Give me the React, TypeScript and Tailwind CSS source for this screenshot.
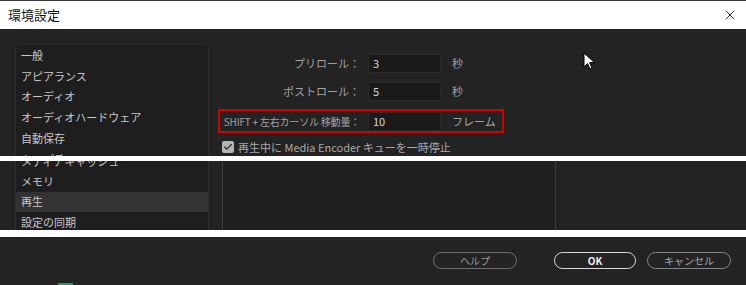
import { Check, X } from 'lucide-react';

const font = { fontFamily: '"Noto Sans CJK JP", "Noto Sans", sans-serif' };

const topItems = ['一般', 'アピアランス', 'オーディオ', 'オーディオハードウェア', '自動保存', 'キャプチャ'];
const midItems = ['メディアキャッシュ', 'メモリ', '再生', '設定の同期'];

function FormRow({ label, value, unit, boxed }: { label: string; value: string; unit: string; boxed?: boolean }) {
  return (
    <div
      className={`flex items-center h-[24px] w-[286px] border-2 ${boxed ? 'border-[#d40000]' : 'border-transparent'}`}
    >
      <div className="w-[148px] pr-[8px] flex justify-end text-[11px] text-[#a2a2a2] whitespace-nowrap">
        <span className={boxed ? 'text-[10px] tracking-[-0.2px]' : ''}>{label}</span>
      </div>
      <div className="w-[73px] h-[19px] shrink-0 bg-[#1a1a1a] border border-[#2a2a2a] rounded-[2px] pl-[4px] text-[11px] leading-[17px] text-[#d6d6d6]">
        {value}
      </div>
      <div className="ml-[11px] text-[11px] text-[#a2a2a2] whitespace-nowrap">{unit}</div>
    </div>
  );
}

function Cursor() {
  return (
    <svg className="absolute left-[583px] top-[52px]" width="13" height="18" viewBox="0 0 13 18">
      <path d="M1 1 L1 15 L4.5 11.5 L7 17 L9 16 L6.6 10.6 L11.5 10.6 Z" fill="#fff" stroke="#000" strokeWidth="1" />
    </svg>
  );
}

export default function App() {
  return (
    <div className="w-[746px] h-[285px] flex flex-col bg-white overflow-hidden" style={font}>
      {/* 上段 */}
      <div className="relative h-[156px] shrink-0 overflow-hidden bg-[#232323] flex flex-col">
        <div className="h-[29px] shrink-0 bg-white border-t border-[#3a3a3a] flex items-center justify-between pl-[8px] pr-[8px]">
          <span className="text-[13px] text-[#111]">環境設定</span>
          <X size={16} strokeWidth={1.4} className="text-[#222]" />
        </div>
        <div className="flex flex-1">
          <div className="ml-[15px] mt-[15px] w-[194px] shrink-0 bg-[#1e1e1e] border border-[#2e2e2e] rounded-t-[4px] flex flex-col">
            {topItems.map((t) => (
              <div key={t} className="h-[20.7px] shrink-0 flex items-center pl-[5px] text-[11px] text-[#c8c8c8] whitespace-nowrap">
                {t}
              </div>
            ))}
          </div>
          <div className="ml-[9px] mt-[22px] flex flex-col">
            <FormRow label="プリロール：" value="3" unit="秒" />
            <div className="mt-[4px]">
              <FormRow label="ポストロール：" value="5" unit="秒" />
            </div>
            <div className="mt-[6px]">
              <FormRow label="SHIFT + 左右カーソル 移動量：" value="10" unit="フレーム" boxed />
            </div>
            <div className="mt-[6px] ml-[4px] flex items-center gap-[4px]">
              <div className="w-[12px] h-[12px] rounded-[2px] bg-[#b4b4b4] flex items-center justify-center">
                <Check size={10} strokeWidth={3} className="text-[#2a2a2a]" />
              </div>
              <span className="text-[11px] text-[#a8a8a8] whitespace-nowrap">再生中に Media Encoder キューを一時停止</span>
            </div>
          </div>
        </div>
        <Cursor />
      </div>

      <div className="h-[5px] shrink-0" />

      {/* 中段 */}
      <div className="h-[69px] shrink-0 overflow-hidden bg-[#232323] flex">
        <div className="ml-[15px] w-[194px] shrink-0 bg-[#1e1e1e] border-x border-[#2e2e2e] flex flex-col">
          <div className="-mt-[10px] flex flex-col">
            {midItems.map((t) => (
              <div
                key={t}
                className={`h-[20.3px] shrink-0 flex items-center pl-[5px] text-[11px] text-[#c8c8c8] whitespace-nowrap ${
                  t === '再生' ? 'bg-[#333333]' : ''
                }`}
              >
                {t}
              </div>
            ))}
          </div>
        </div>
        <div className="ml-[13px] w-[334px] bg-[#1f1f1f] border-x border-[#3a3a3a]" />
      </div>

      <div className="h-[7px] shrink-0" />

      {/* 下段 */}
      <div className="relative h-[48px] shrink-0 bg-[#232323] flex items-start justify-end pt-[15px] pr-[15px]">
        <button className="w-[84px] h-[17px] rounded-full border border-[#6e6e6e] text-[10px] leading-none text-[#9a9a9a]">
          ヘルプ
        </button>
        <button className="ml-[37px] w-[82px] h-[17px] rounded-full border-[1.5px] border-[#dcdcdc] text-[10px] leading-none font-bold text-[#f0f0f0]">
          OK
        </button>
        <button className="ml-[11px] w-[84px] h-[17px] rounded-full border border-[#858585] text-[10px] leading-none text-[#a8a8a8]">
          キャンセル
        </button>
        <div className="absolute left-[58px] bottom-0 w-[15px] h-[2px] bg-[#3c8a6c]" />
      </div>
    </div>
  );
}
